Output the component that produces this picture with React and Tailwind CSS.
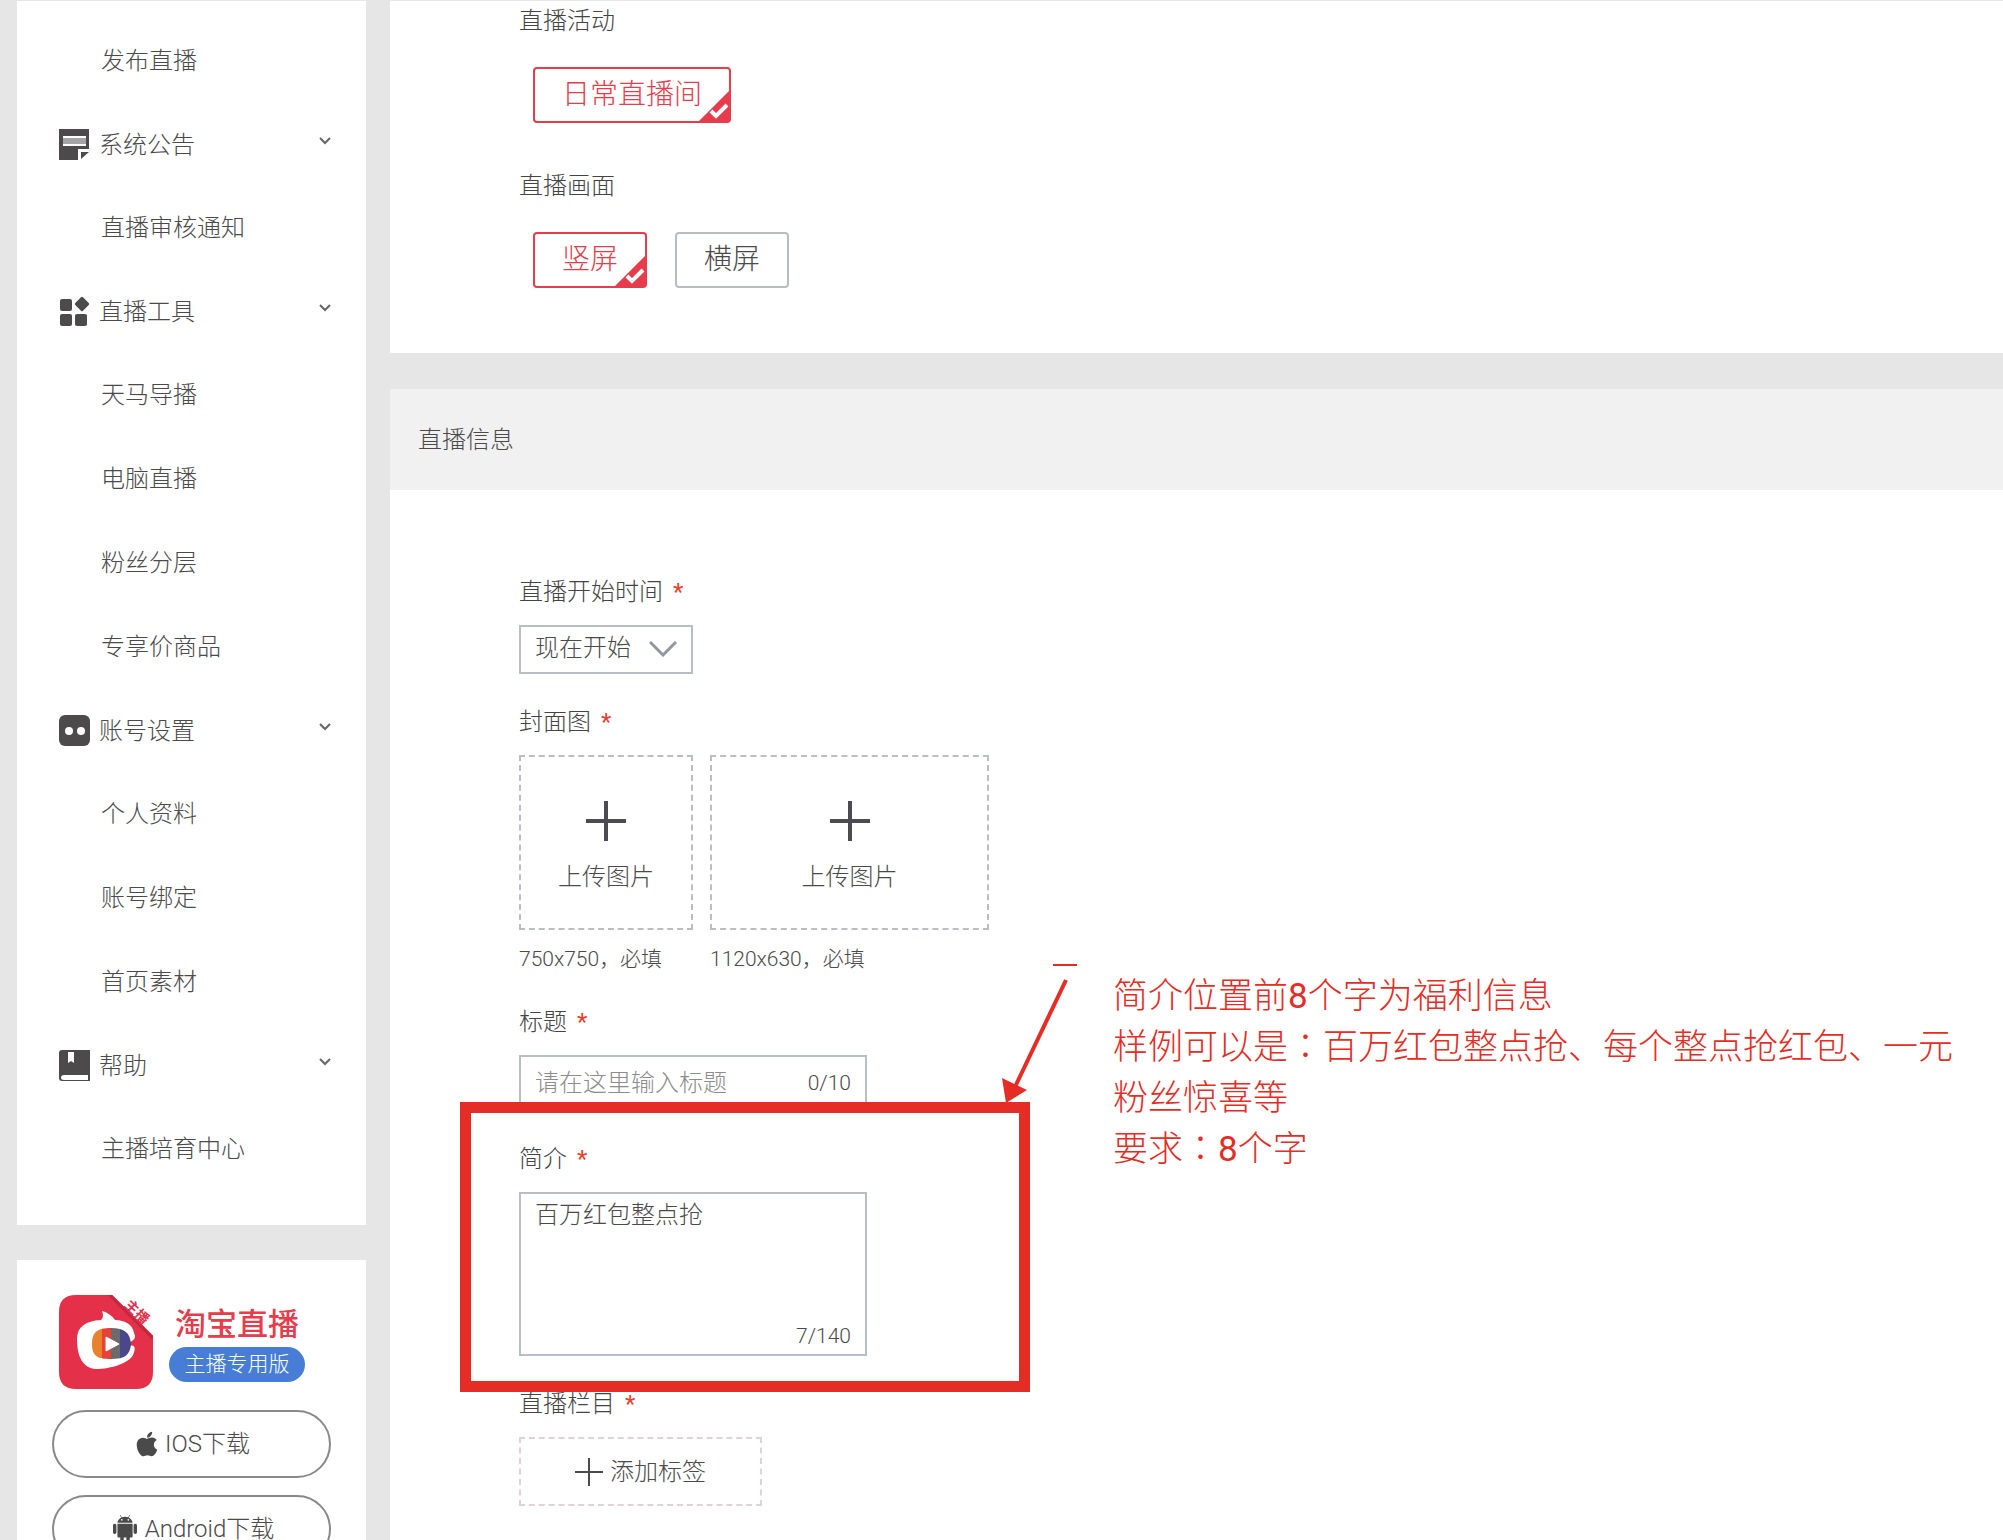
import { FaApple } from "react-icons/fa";
import { AiFillAndroid } from "react-icons/ai";

const NoticeIcon = () => (
  <svg viewBox="0 0 31 31" className="h-[31px] w-[31px]" aria-hidden="true">
    <path d="M0 0H30V20H19V31H0Z" fill="#4c4a4b" />
    <path d="M22 23H30L22 30Z" fill="#4c4a4b" />
    <path d="M4 8H27M4 16H27" stroke="#fff" strokeWidth="2" />
    <path d="M4 12H27" stroke="#a5a4a6" strokeWidth="6" />
  </svg>
);

const ToolsIcon = () => (
  <svg viewBox="0 0 31 31" className="h-[31px] w-[31px]" fill="#4c4a4b" aria-hidden="true">
    <rect x="1" y="3" width="12" height="12" rx="2" />
    <rect x="1" y="18" width="12" height="12" rx="2" />
    <rect x="16" y="18" width="12" height="12" rx="2" />
    <rect x="17.5" y="2.500" width="11" height="11" rx="1.5" transform="rotate(45 23 8)" />
  </svg>
);

const AccountIcon = () => (
  <svg viewBox="0 0 31 31" className="h-[31px] w-[31px]" aria-hidden="true">
    <rect width="31" height="31" rx="6" fill="#4c4a4b" />
    <circle cx="10" cy="16" r="4" fill="#fff" />
    <circle cx="22" cy="16" r="4" fill="#fff" />
  </svg>
);

const HelpIcon = () => (
  <svg viewBox="0 0 31 31" className="h-[31px] w-[31px]" aria-hidden="true">
    <path d="M3 0H31V31H3Q0 31 0 28V3Q0 0 3 0Z" fill="#4c4a4b" />
    <path d="M9 2H15V13L12 11L9 13Z" fill="#fff" />
    <path d="M5 25H29V30H5Q2 30 2 27.500Q2 25 5 25Z" fill="#fff" />
  </svg>
);

const menu = [
  { items: ["发布直播"] },
  { title: "系统公告", Icon: NoticeIcon, items: ["直播审核通知"] },
  {
    title: "直播工具",
    Icon: ToolsIcon,
    items: ["天马导播", "电脑直播", "粉丝分层", "专享价商品"],
  },
  {
    title: "账号设置",
    Icon: AccountIcon,
    items: ["个人资料", "账号绑定", "首页素材"],
  },
  { title: "帮助", Icon: HelpIcon, items: ["主播培育中心"] },
];

function Logo() {
  return (
    <svg viewBox="0 0 94 94" className="h-[94px] w-[94px] shrink-0" aria-hidden="true">
      <path d="M17 0H52L94 42V77Q94 94 77 94H17Q0 94 0 77V17Q0 0 17 0Z" fill="#e5304a" />
      <path d="M50 0L93 43L94 42L52 0Z" fill="#c4283f" stroke="#c4283f" strokeWidth="2" />
      <path
        d="M43 16C50 18 54 22 56 25C66 25 74 30 75 38C77 42 76 45 71 47V51C76 49 77 54 74 60C70 68 52 74 37 74C24 73 18 62 18 44C18 32 26 26 42 25C45 22 44 19 43 16Z"
        fill="#fff"
      />
      <clipPath id="eye">
        <path d="M52 33C66 33 71 38 72 49C71 60 66 64 52 64C38 64 33 61 33 49C33 37 38 33 52 33Z" />
      </clipPath>
      <g clipPath="url(#eye)">
        <rect x="33" y="32" width="10" height="33" fill="#e9822f" />
        <rect x="43" y="32" width="9" height="33" fill="#ea4137" />
        <rect x="52" y="32" width="9" height="33" fill="#6b6b6d" />
        <rect x="61" y="32" width="12" height="33" fill="#4a478c" />
      </g>
      <path d="M47 42L60 49L47 56Z" fill="#fff" stroke="#fff" strokeLinejoin="round" />
      <text
        x="78"
        y="22"
        transform="rotate(44 78 17)"
        textAnchor="middle"
        fontSize="14"
        fontWeight="700"
        fill="#e5304a"
      >
        主播
      </text>
    </svg>
  );
}

function Sidebar() {
  return (
    <aside className="w-[349px] shrink-0">
      <nav className="bg-white pt-[18px] pb-[34px]">
        {menu.map(({ title, Icon, items }) => (
          <div key={title || "top"}>
            {title && (
              <button className="flex h-[83px] w-full items-center pr-[35px] pl-[42px]">
                <Icon />
                <span className="ml-[9px]">{title}</span>
                <svg
                  viewBox="0 0 12 8"
                  className="mb-2 ml-auto h-2 w-3"
                  fill="none"
                  stroke="#666"
                  strokeWidth="2"
                  aria-hidden="true"
                >
                  <path d="M1 1L6 6L11 1" />
                </svg>
              </button>
            )}
            {items.map((item) => (
              <a key={item} href="#" className="flex h-[84px] items-center pl-[84px]">
                {item}
              </a>
            ))}
          </div>
        ))}
      </nav>

      <div className="mt-[35px] bg-white px-[35px] py-[35px]">
        <div className="flex items-center pl-[7px]">
          <Logo />
          <div className="ml-4 flex flex-col items-center">
            <p className="text-[31px] leading-[44px] font-medium text-[#e63c4c]">淘宝直播</p>
            <p className="w-[136px] rounded-full bg-[#477dd5] text-center text-[21px] leading-[35px] text-white">
              主播专用版
            </p>
          </div>
        </div>
        <button className="mt-[21px] flex h-[68px] w-full items-center justify-center gap-1 rounded-full border-2 border-[#8b888a]">
          <FaApple className="h-7 w-7" />
          IOS下载
        </button>
        <button className="mt-[17px] flex h-[68px] w-full items-center justify-center gap-1 rounded-full border-2 border-[#8b888a]">
          <AiFillAndroid className="h-8 w-8" />
          Android下载
        </button>
      </div>
    </aside>
  );
}

function Choice({ children, active }) {
  return (
    <button
      className={
        active
          ? "relative h-14 rounded border-2 border-[#e63c4c] px-[27px] text-[28px] text-[#e63c4c]"
          : "h-14 rounded border-2 border-[#b7bbc2] px-[27px] text-[28px]"
      }
    >
      {children}
      {active && (
        <svg viewBox="0 0 30 30" className="absolute right-0 bottom-0 h-[30px] w-[30px]" aria-hidden="true">
          <path d="M30 0V30H0Z" fill="#e63c4c" />
          <path d="M12 20L17 25L28 14" fill="none" stroke="#fff" strokeWidth="4" />
        </svg>
      )}
    </button>
  );
}

function Label({ htmlFor, children }) {
  return (
    <label htmlFor={htmlFor} className="mb-[13px] flex gap-[10px] leading-10 text-[#444]">
      {children}
      <span className="font-normal text-[#e8402c]">*</span>
    </label>
  );
}

function Upload({ id, size, className }) {
  return (
    <div>
      <button
        id={id}
        type="button"
        className={
          "flex h-[175px] flex-col items-center justify-center gap-[10px] border-2 border-dashed border-[#bbbec6] pt-4 " +
          className
        }
      >
        <svg viewBox="0 0 42 42" className="h-[42px] w-[42px]" stroke="#4c4c50" strokeWidth="4" aria-hidden="true">
          <path d="M21 1V41M1 21H41" />
        </svg>
        <span className="leading-[50px]">上传图片</span>
      </button>
      <p className="mt-[14px] text-[21px] leading-[30px]">{size}，必填</p>
    </div>
  );
}

const Colon = () => (
  <span className="font-['Noto_Sans_CJK_TC',sans-serif] leading-none">：</span>
);

// red marker pen drawn on top of the intro field
function Annotation() {
  return (
    <div className="pointer-events-none text-[#e52d26]">
      <div className="absolute -top-[37px] -left-[59px] h-[290px] w-[570px] border-11 border-[#e52d26]" />
      <svg
        viewBox="0 0 80 140"
        className="absolute -top-[176px] left-[481px] h-[140px] w-[80px]"
        fill="currentColor"
        aria-hidden="true"
      >
        <rect x="53" y="1" width="24" height="2" />
        <path d="M66 17L15 124" stroke="currentColor" strokeWidth="4" />
        <path d="M2 115L27 127L6 140Z" />
      </svg>
      <p className="absolute -top-[168px] left-[594px] w-[860px] text-[35px] leading-[51px]">
        简介位置前<b className="leading-none">8</b>个字为福利信息
        <br />
        样例可以是<Colon />百万红包整点抢、每个整点抢红包、一元
        <br />
        粉丝惊喜等
        <br />
        要求<Colon />
        <b className="leading-none">8</b>个字
      </p>
    </div>
  );
}

function App() {
  return (
    <div className="flex h-screen items-start overflow-hidden bg-[#e6e6e6] pt-px pl-[17px] font-['Roboto','Noto_Sans_CJK_SC',sans-serif] text-2xl font-light text-[#4a4a4a]">
      <Sidebar />

      <main className="ml-6 min-w-0 flex-1">
        <section className="bg-white pb-[65px] pl-[129px]">
          <h3 className="leading-10 text-[#444]">直播活动</h3>
          <div className="mt-[26px] ml-[14px] flex">
            <Choice active>日常直播间</Choice>
          </div>
          <h3 className="mt-[43px] leading-10 text-[#444]">直播画面</h3>
          <div className="mt-[26px] ml-[14px] flex gap-7">
            <Choice active>竖屏</Choice>
            <Choice>横屏</Choice>
          </div>
        </section>

        <section className="mt-9 bg-white">
          <h2 className="bg-[#f1f1f1] pt-[2px] pl-7 leading-[99px]">直播信息</h2>
          <form className="flex flex-col gap-7 pt-[82px] pb-[60px] pl-[129px]">
            <div>
              <Label htmlFor="start">直播开始时间</Label>
              <div className="relative w-[174px]">
                <select
                  id="start"
                  className="h-[49px] w-full appearance-none border-2 border-[#b9bdc7] bg-white pb-1 pl-[14px]"
                >
                  <option>现在开始</option>
                </select>
                <svg
                  viewBox="0 0 28 16"
                  className="pointer-events-none absolute top-4 right-4 h-4 w-7"
                  fill="none"
                  stroke="#94979f"
                  strokeWidth="3"
                  aria-hidden="true"
                >
                  <path d="M1 1L14 14L27 1" />
                </svg>
              </div>
            </div>

            <div>
              <Label htmlFor="cover">封面图</Label>
              <div className="flex gap-[17px]">
                <Upload id="cover" size="750x750" className="w-[174px]" />
                <Upload id="cover-wide" size="1120x630" className="w-[279px]" />
              </div>
            </div>

            <div>
              <Label htmlFor="title">标题</Label>
              <div className="flex h-14 w-[348px] items-center border-2 border-[#b9bdc7] px-[14px]">
                <input
                  id="title"
                  type="text"
                  placeholder="请在这里输入标题"
                  className="min-w-0 flex-1 outline-none placeholder:text-[#8c8c8c]"
                />
                <span className="text-[21px]">0/10</span>
              </div>
            </div>

            <div className="relative">
              <Label htmlFor="intro">简介</Label>
              <div className="flex h-[164px] w-[348px] flex-col border-2 border-[#b9bdc7] px-[14px] pt-1 pb-[6px]">
                <textarea
                  id="intro"
                  defaultValue="百万红包整点抢"
                  className="w-full flex-1 resize-none leading-[34px] outline-none"
                />
                <span className="text-right text-[21px] leading-6">7/140</span>
              </div>
              <Annotation />
            </div>

            <div>
              <Label htmlFor="column">直播栏目</Label>
              <button
                id="column"
                type="button"
                className="flex h-[69px] w-[243px] items-center justify-center gap-[7px] border-2 border-dashed border-[#e0d3d6]"
              >
                <svg viewBox="0 0 28 28" className="h-7 w-7" stroke="#4c4c50" strokeWidth="2" aria-hidden="true">
                  <path d="M14 0V28M0 14H28" />
                </svg>
                添加标签
              </button>
            </div>
          </form>
        </section>
      </main>
    </div>
  );
}

export default App;
